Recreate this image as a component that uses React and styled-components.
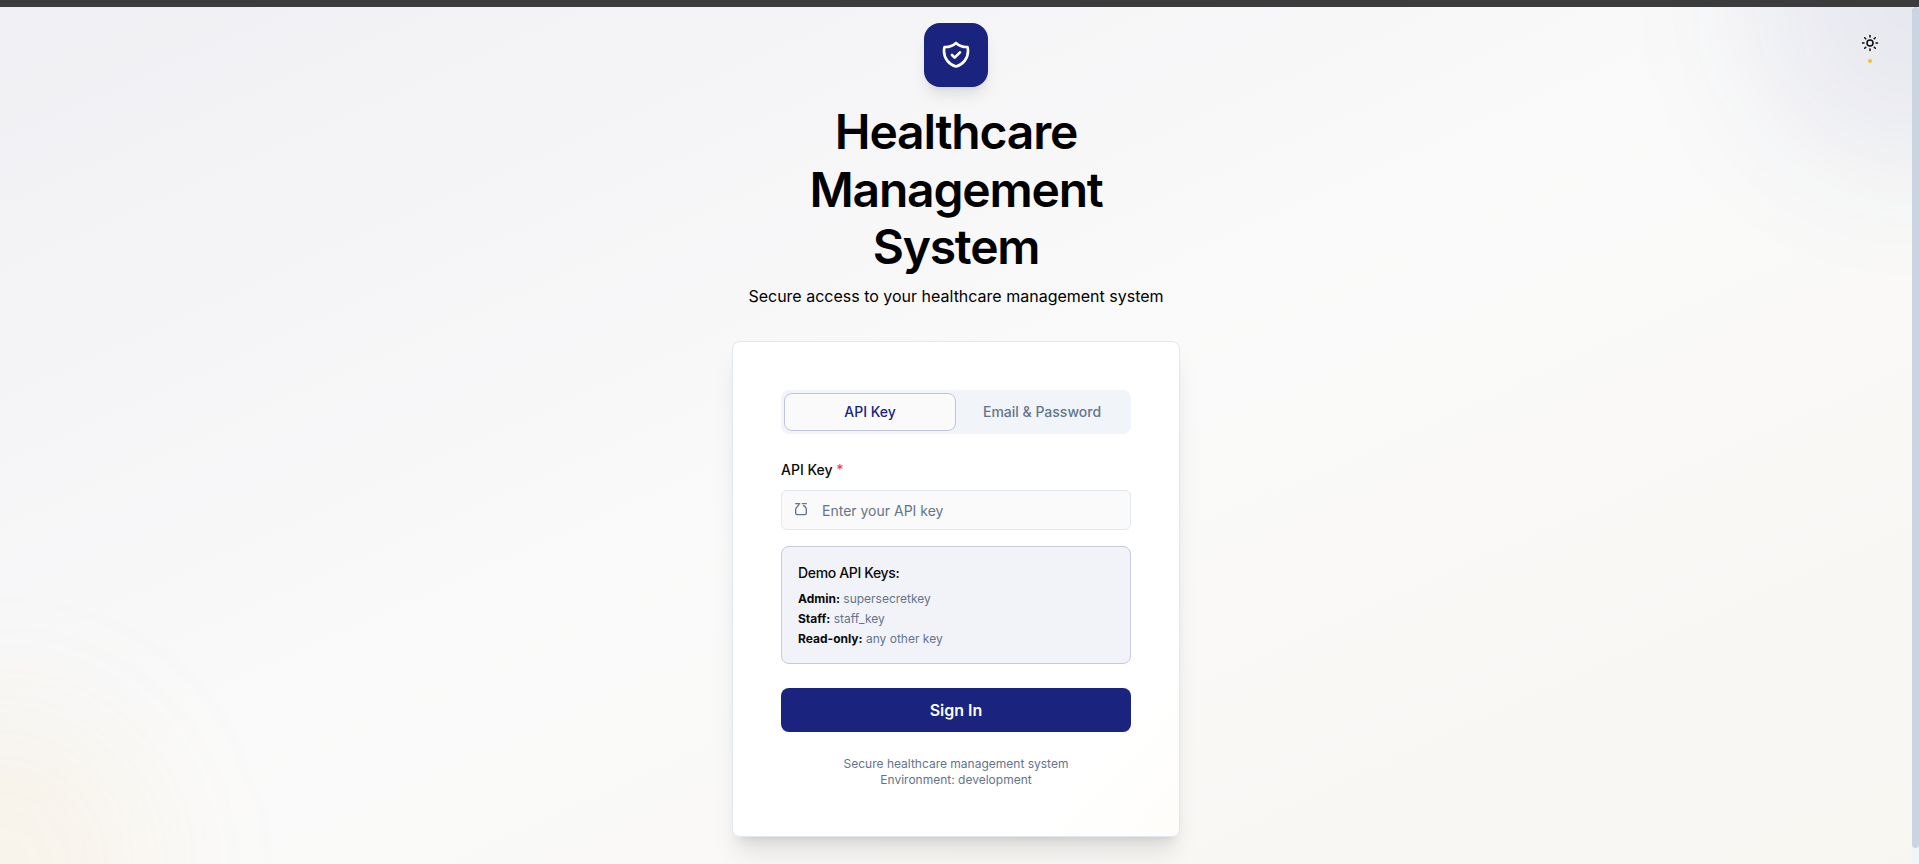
import React, { useState } from "react";
import styled, { createGlobalStyle } from "styled-components";
import { Sun } from "lucide-react";

const GlobalStyle = createGlobalStyle`
  *, *::before, *::after { box-sizing: border-box; }
  body {
    margin: 0;
    background: #fafafa;
    color: #0a0a0a;
    font-family: Inter, "Liberation Sans", sans-serif;
    font-size: 14px;
    line-height: 20px;
  }
  h1, h2, p, ul { margin: 0; padding: 0; }
  button, input { font: inherit; }
`;

const Page = styled.div`
  display: flex;
  flex-direction: column;
  min-height: 100vh;
`;

const TopBar = styled.div`
  height: 7px;
  background: #3c3c3c;
`;

const Viewport = styled.div`
  display: flex;
  flex: 1;
`;

const Main = styled.main`
  position: relative;
  flex: 1;
  display: flex;
  flex-direction: column;
  align-items: center;
  padding: 16px 16px 24px;
  overflow: hidden;
  background: linear-gradient(to bottom right, #f0f0f4, #fafafa 50%, #f8f6f1);
`;

const Rail = styled.div`
  width: 7px;
  padding-bottom: 16px;
  display: flex;
  background: #f1f5f9;
`;

const Thumb = styled.div`
  flex: 1;
  border-radius: 4px;
  background: #cbd5e1;
`;

const Glow = styled.div`
  position: absolute;
  width: 320px;
  height: 320px;
  border-radius: 50%;
  filter: blur(64px);
  background: ${(p) => p.$color};
  ${(p) => (p.$corner === "top" ? "top: -160px; right: -160px;" : "bottom: -160px; left: -160px;")}
`;

const ThemeButton = styled.button`
  position: absolute;
  top: 16px;
  right: 22px;
  width: 40px;
  height: 40px;
  padding: 0;
  display: grid;
  place-items: center;
  border: 0;
  background: transparent;
  color: #0a0a0a;
  cursor: pointer;

  &::after {
    content: "";
    position: absolute;
    bottom: 0;
    left: 18px;
    width: 4px;
    height: 4px;
    border-radius: 50%;
    background: #fbbf24;
  }
`;

const Column = styled.div`
  position: relative;
  width: 100%;
  max-width: 448px;
`;

const Header = styled.header`
  display: flex;
  flex-direction: column;
  align-items: center;
  margin-bottom: 32px;
  text-align: center;
  color: #000;
`;

const Logo = styled.div`
  display: grid;
  place-items: center;
  width: 64px;
  height: 64px;
  margin-bottom: 16px;
  border-radius: 16px;
  background: #1a237e;
  color: #fff;
  box-shadow: 0 10px 15px -3px rgba(0, 0, 0, 0.1), 0 4px 6px -4px rgba(0, 0, 0, 0.1);
`;

const Title = styled.h1`
  margin-bottom: 7px;
  font-size: 48px;
  font-weight: 600;
  line-height: 1.2;
  letter-spacing: -0.025em;
`;

const Subtitle = styled.p`
  font-size: 16px;
  line-height: 26px;
`;

const Card = styled.section`
  padding: 48px;
  border: 1px solid #e2e8f0;
  border-radius: 8px;
  background: linear-gradient(to bottom right, #fff 80%, #fefdfa);
  box-shadow: 0 20px 25px -5px rgba(0, 0, 0, 0.1), 0 8px 10px -6px rgba(0, 0, 0, 0.1);
`;

const Tabs = styled.div`
  display: grid;
  grid-template-columns: 1fr 1fr;
  height: 44px;
  margin-bottom: 26px;
  padding: 3px;
  border-radius: 8px;
  background: #f1f5f9;
`;

const Tab = styled.button`
  padding: 0;
  border: 1px solid ${(p) => (p.$active ? "#c0c3de" : "transparent")};
  border-radius: 8px;
  background: ${(p) => (p.$active ? "#fafafa" : "transparent")};
  color: ${(p) => (p.$active ? "#1a237e" : "#64748b")};
  font-weight: 500;
  cursor: pointer;
`;

const Label = styled.label`
  display: block;
  margin-bottom: 10px;
  font-weight: 500;
`;

const Required = styled.span`
  color: #ef4444;
`;

const Field = styled.div`
  display: flex;
  align-items: center;
  gap: 13px;
  height: 40px;
  margin-bottom: 16px;
  padding: 0 11px;
  border: 1px solid #e2e8f0;
  border-radius: 6px;
  background: #fafafa;
  color: #64748b;
`;

const Input = styled.input`
  flex: 1;
  min-width: 0;
  padding: 2px 0 0;
  border: 0;
  outline: 0;
  background: transparent;
  color: #0a0a0a;

  &::placeholder {
    color: #64748b;
    opacity: 1;
  }
`;

const Demo = styled.section`
  margin-bottom: 24px;
  padding: 16px 16px 14px;
  border: 1px solid #c6c8df;
  border-radius: 8px;
  background: #f2f3f8;
`;

const DemoTitle = styled.h2`
  margin-bottom: 6px;
  font-size: 14px;
  font-weight: 500;
  line-height: 20px;
  letter-spacing: -0.025em;
`;

const DemoList = styled.ul`
  list-style: none;
  color: #64748b;
  font-size: 12px;
  line-height: 20px;

  strong {
    color: #0a0a0a;
    font-weight: 700;
  }
`;

const Submit = styled.button`
  width: 100%;
  height: 44px;
  margin-bottom: 24px;
  border: 0;
  border-radius: 8px;
  background: #1a237e;
  color: #fafafa;
  font-size: 16px;
  font-weight: 600;
  cursor: pointer;
`;

const Footnote = styled.footer`
  text-align: center;
  color: #64748b;
  font-size: 12px;
  line-height: 16px;
`;

const Icon = ({ size, children }) => (
  <svg
    width={size}
    height={size}
    viewBox="0 0 24 24"
    fill="none"
    stroke="currentColor"
    strokeWidth={2}
    strokeLinecap="round"
    strokeLinejoin="round"
    aria-hidden="true"
  >
    {children}
  </svg>
);

const ShieldIcon = () => (
  <Icon size={32}>
    <path d="M9 12l2 2 4-4m5.618-4.016A11.955 11.955 0 0112 2.944a11.955 11.955 0 01-8.618 3.04A12.02 12.02 0 003 9c0 5.591 3.824 10.29 9 11.622 5.176-1.332 9-6.03 9-11.622 0-1.042-.133-2.052-.382-3.016z" />
  </Icon>
);

const KeyIcon = () => (
  <Icon size={16}>
    <path d="M4 2.500H10M14 2.500h6M9 3c0 3-5 4-5 8.500V17a2 2 0 0 0 2 2h12a2 2 0 0 0 2-2v-5.500c0-3-2-5-4-6" />
  </Icon>
);

const TABS = ["API Key", "Email & Password"];

const DEMO_KEYS = [
  ["Admin:", "supersecretkey"],
  ["Staff:", "staff_key"],
  ["Read-only:", "any other key"],
];

export default function App() {
  const [active, setActive] = useState(TABS[0]);
  return (
    <Page>
      <GlobalStyle />
      <TopBar />
      <Viewport>
        <Main>
          <Glow $corner="top" $color="rgba(26, 35, 126, 0.08)" />
          <Glow $corner="bottom" $color="rgba(225, 175, 60, 0.08)" />
          <Column>
            <Header>
              <Logo>
                <ShieldIcon />
              </Logo>
              <Title>Healthcare Management System</Title>
              <Subtitle>Secure access to your healthcare management system</Subtitle>
            </Header>
            <Card>
              <Tabs role="tablist">
                {TABS.map((tab) => (
                  <Tab
                    key={tab}
                    type="button"
                    role="tab"
                    aria-selected={tab === active}
                    $active={tab === active}
                    onClick={() => setActive(tab)}
                  >
                    {tab}
                  </Tab>
                ))}
              </Tabs>
              <form onSubmit={(e) => e.preventDefault()}>
                <Label htmlFor="api-key">
                  API Key <Required>*</Required>
                </Label>
                <Field>
                  <KeyIcon />
                  <Input id="api-key" type="password" placeholder="Enter your API key" />
                </Field>
                <Demo>
                  <DemoTitle>Demo API Keys:</DemoTitle>
                  <DemoList>
                    {DEMO_KEYS.map(([role, key]) => (
                      <li key={role}>
                        <strong>{role}</strong> {key}
                      </li>
                    ))}
                  </DemoList>
                </Demo>
                <Submit type="submit">Sign In</Submit>
              </form>
              <Footnote>
                <p>Secure healthcare management system</p>
                <p>Environment: development</p>
              </Footnote>
            </Card>
          </Column>
          <ThemeButton type="button" aria-label="Toggle theme">
            <Sun size={18} />
          </ThemeButton>
        </Main>
        <Rail>
          <Thumb />
        </Rail>
      </Viewport>
    </Page>
  );
}
